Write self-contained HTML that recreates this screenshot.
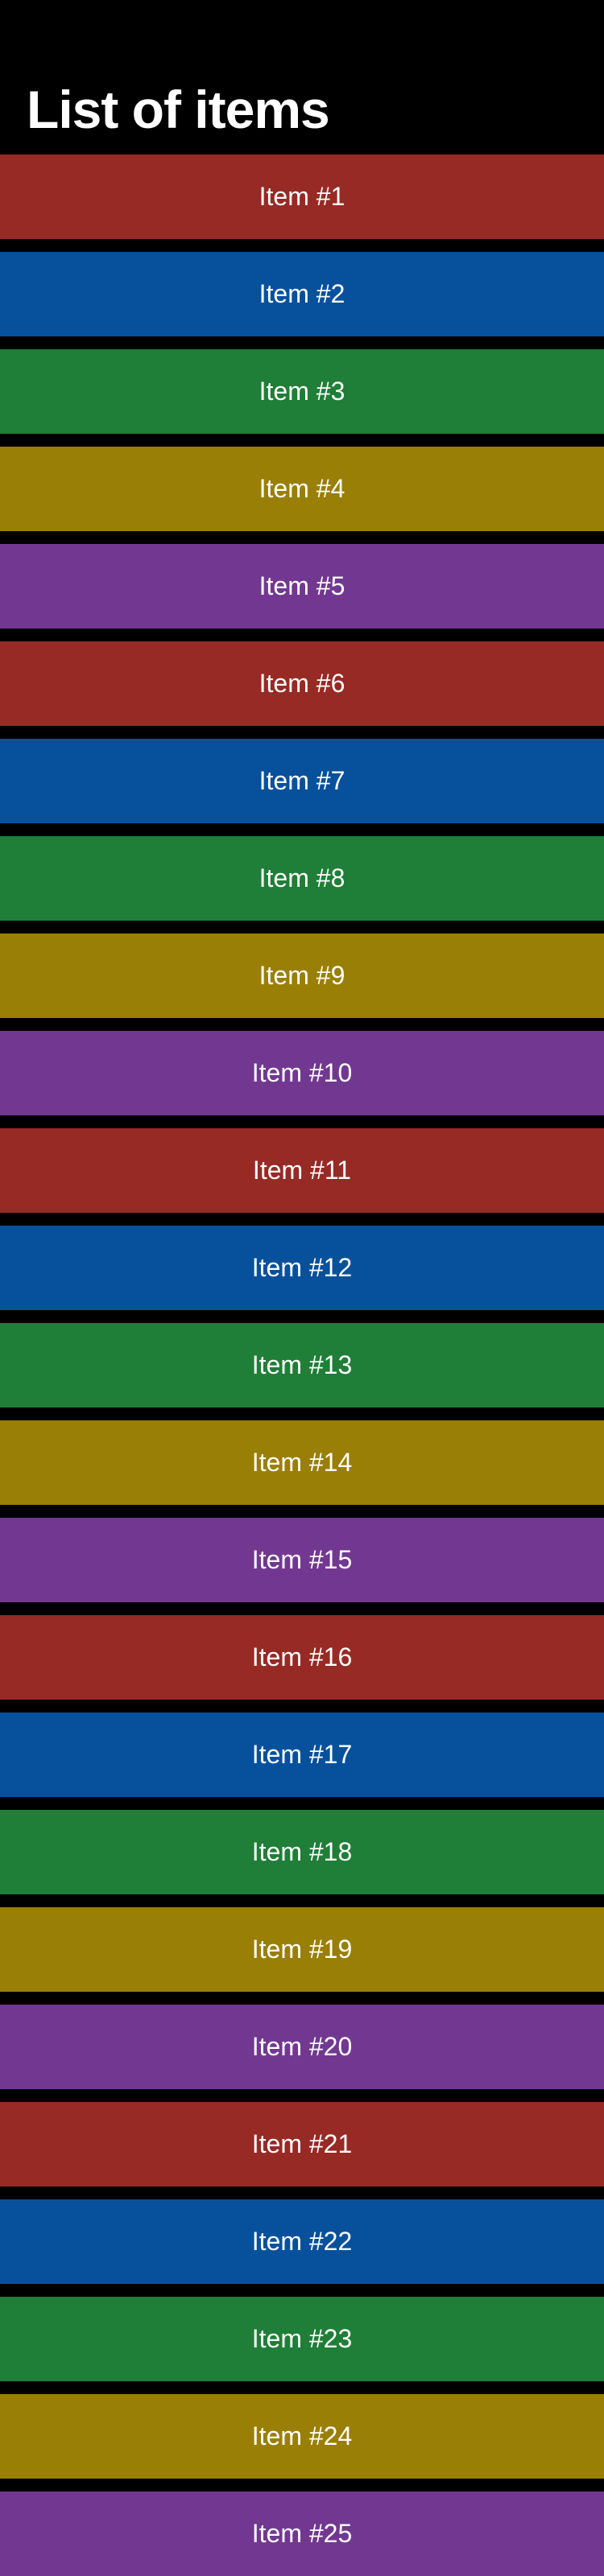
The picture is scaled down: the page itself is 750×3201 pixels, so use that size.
<!DOCTYPE html>
<html><head><meta charset="utf-8"><style>
*{margin:0;padding:0;box-sizing:border-box}
body{width:750px;height:3201px;background:#000;overflow:hidden;font-family:"Liberation Sans",sans-serif;color:#fff}
h1{position:absolute;left:33px;top:96px;font-size:66px;font-weight:bold;line-height:80px;letter-spacing:-1px}
.it{position:absolute;left:0;width:750px;height:105px;line-height:105px;text-align:center;font-size:32px}
.r{background:#972a25}.b{background:#07519c}.g{background:#1f7e37}.y{background:#9a7f06}.p{background:#723891}
</style></head><body>
<h1>List of items</h1>
<div class="it r" style="top:192px">Item #1</div>
<div class="it b" style="top:313px">Item #2</div>
<div class="it g" style="top:434px">Item #3</div>
<div class="it y" style="top:555px">Item #4</div>
<div class="it p" style="top:676px">Item #5</div>
<div class="it r" style="top:797px">Item #6</div>
<div class="it b" style="top:918px">Item #7</div>
<div class="it g" style="top:1039px">Item #8</div>
<div class="it y" style="top:1160px">Item #9</div>
<div class="it p" style="top:1281px">Item #10</div>
<div class="it r" style="top:1402px">Item #11</div>
<div class="it b" style="top:1523px">Item #12</div>
<div class="it g" style="top:1644px">Item #13</div>
<div class="it y" style="top:1765px">Item #14</div>
<div class="it p" style="top:1886px">Item #15</div>
<div class="it r" style="top:2007px">Item #16</div>
<div class="it b" style="top:2128px">Item #17</div>
<div class="it g" style="top:2249px">Item #18</div>
<div class="it y" style="top:2370px">Item #19</div>
<div class="it p" style="top:2491px">Item #20</div>
<div class="it r" style="top:2612px">Item #21</div>
<div class="it b" style="top:2733px">Item #22</div>
<div class="it g" style="top:2854px">Item #23</div>
<div class="it y" style="top:2975px">Item #24</div>
<div class="it p" style="top:3096px">Item #25</div>
</body></html>
